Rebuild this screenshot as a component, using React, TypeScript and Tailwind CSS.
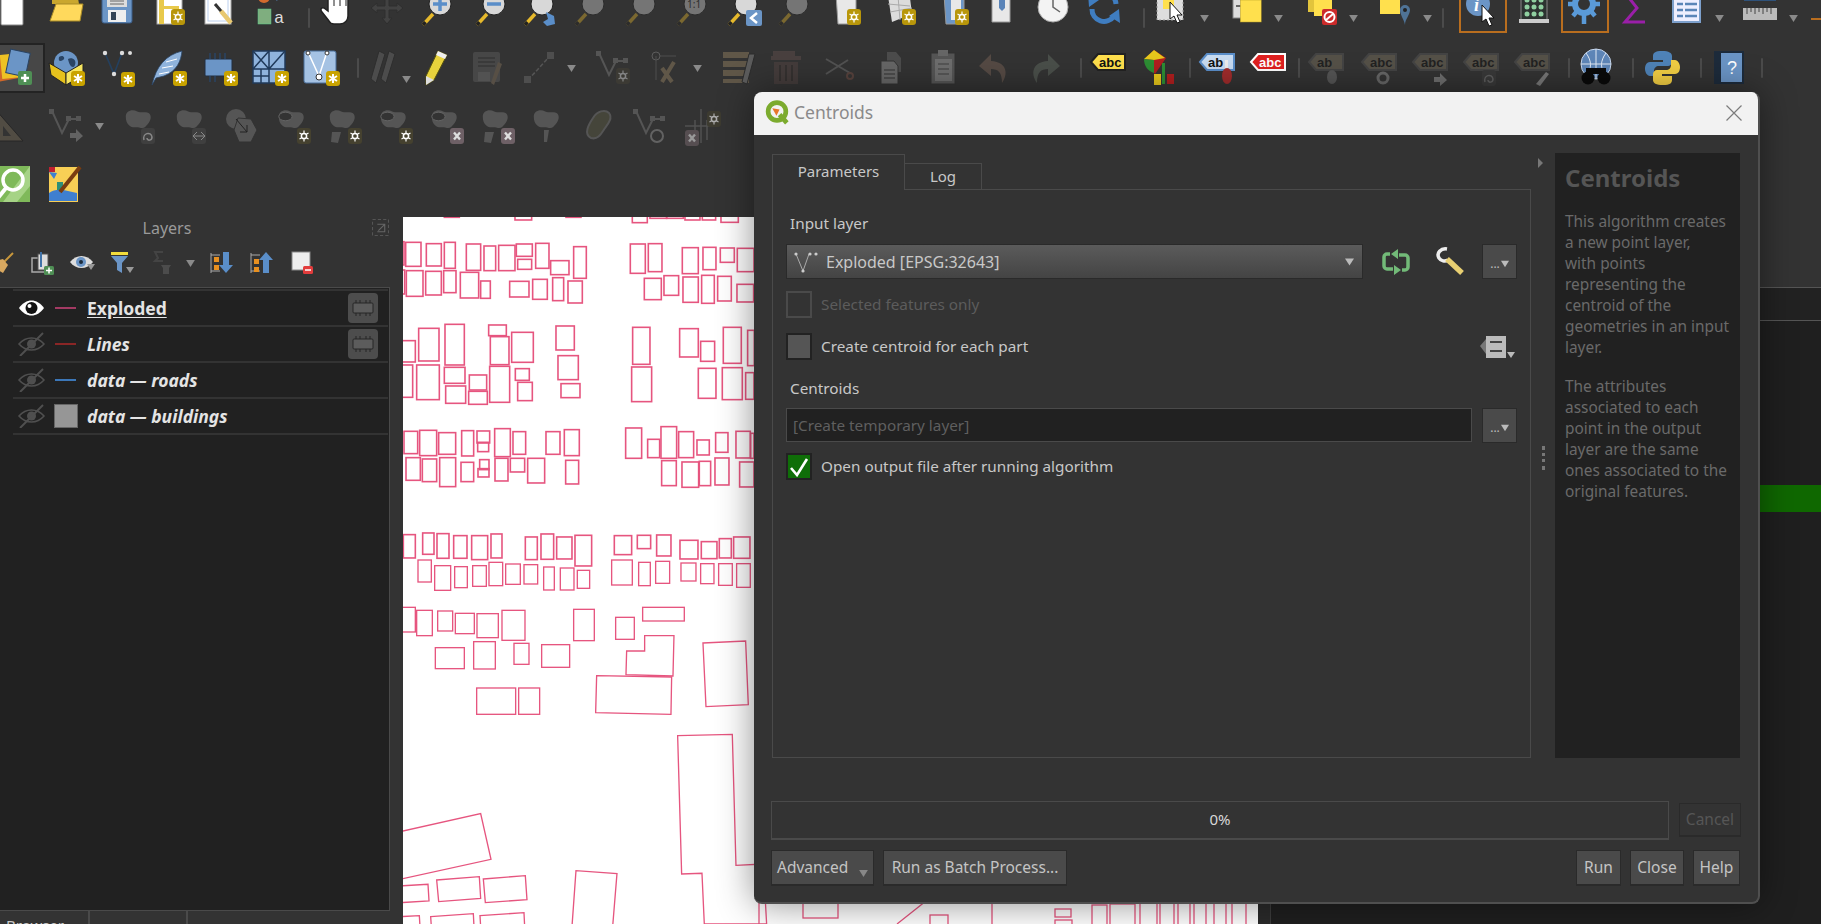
import type { ReactNode } from "react";

type P = { children?: ReactNode; className?: string };

// ---- toolbar bits ----

function Ic({ children, className = "" }: P) {
  return (
    <svg viewBox="0 0 36 36" className={`w-9 h-9 shrink-0 overflow-visible ${className}`}>
      {children}
    </svg>
  );
}

function T({ children, className = "" }: P) {
  return <div className={`relative w-[51px] shrink-0 flex justify-center items-center ${className}`}>{children}</div>;
}

function Drop({ className = "mr-[7px]" }: { className?: string }) {
  return (
    <div className={`w-[16px] shrink-0 flex justify-center ${className}`}>
      <svg viewBox="0 0 10 8" className="w-[9px] h-[7px]">
        <path d="M0 0h10L5 8z" fill="#8a8a8a" />
      </svg>
    </div>
  );
}

function Sep({ className = "" }: { className?: string }) {
  return (
    <div className={`shrink-0 flex justify-end pr-[1px] ${className}`}>
      <div className="w-[2px] h-[20px] bg-[#4b4b4b] rounded-sm" />
    </div>
  );
}

// badges
const StarB = ({ x = 22, y = 22 }: { x?: number; y?: number }) => (
  <g transform={`translate(${x} ${y})`}>
    <rect width="14" height="15" rx="3" fill="#c9a300" />
    <path d="M7 3v9M3 5l8 5M11 5l-8 5" stroke="#fff" strokeWidth="2" />
  </g>
);
const GearB = ({ x = 22, y = 20, fill = "#b8960a" }: { x?: number; y?: number; fill?: string }) => (
  <g transform={`translate(${x} ${y})`}>
    <rect width="14" height="16" rx="3" fill={fill} />
    <circle cx="7" cy="8" r="2.6" fill="none" stroke="#fff" strokeWidth="1.5" />
    <path d="M7 2.5v3M7 10.500v3M2.500 5l2.500 1.500M11.500 5l-2.500 1.500M2.500 11l2.500-1.500M11.500 11l-2.500-1.500" stroke="#fff" strokeWidth="1.200" />
  </g>
);
const XB = ({ x = 22, y = 20 }: { x?: number; y?: number }) => (
  <g transform={`translate(${x} ${y})`}>
    <rect width="14" height="16" rx="3" fill="#6e6066" />
    <path d="M4 4.500l6 7M10 4.500l-6 7" stroke="#ddd" strokeWidth="2.400" />
  </g>
);
const Vee = ({ c = "#24405f", n = "#ddd" }: { c?: string; n?: string }) => (
  <g>
    <path d="M6 3l9 21 8-21" fill="none" stroke={c} strokeWidth="1.600" />
    <circle cx="6" cy="3" r="2.200" fill={n} />
    <circle cx="15" cy="24" r="2.200" fill={n} />
    <circle cx="23" cy="3" r="2.200" fill={n} />
    <circle cx="31" cy="3" r="2" fill={n} />
  </g>
);
const Lens = () => (
  <g>
    <path d="M3 33l10-11" stroke="#e6b92c" strokeWidth="3.500" />
    <path d="M3 33l2.500-2.800" stroke="#222" strokeWidth="3.500" />
    <circle cx="20" cy="12" r="11" fill="#d8d8d8" stroke="#222" strokeWidth="1" />
  </g>
);
const Blob = ({ f = "#555" }: { f?: string }) => (
  <path d="M4 10c0-7 7-9 12-6 4 2 8 0 12 2 4 3 2 10-1 13-3 3-3 6-9 4-4-1-7 1-10-2-3-3-4-6-4-11z" fill={f} transform="scale(.95 .85)" />
);
const Ring = () => (
  <g transform="scale(.95 .85)">
    <path d="M4 10c0-7 7-9 12-6 4 2 8 0 12 2 4 3 2 10-1 13-3 3-3 6-9 4-4-1-7 1-10-2-3-3-4-6-4-11z" fill="#555" />
    <ellipse cx="11" cy="10" rx="7" ry="5" fill="#333" stroke="#666" />
  </g>
);

const DocI = () => (
  <Ic>
    <path d="M4 -4h22v28a1 1 0 0 1-1 1H5a1 1 0 0 1-1-1z" fill="#fff" stroke="#888" />
  </Ic>
);
const FolderI = () => (
  <Ic>
    <path d="M4 -2h26l1 6H4z" fill="#caa72e" />
    <path d="M8 4h27l-3 17H2z" fill="#ffd95c" stroke="#a98b26" />
  </Ic>
);
const SaveI = () => (
  <Ic>
    <rect x="3" y="-6" width="30" height="29" rx="2" fill="#6b95c6" stroke="#3a5d88" />
    <rect x="8" y="-4" width="20" height="11" fill="#ddd" />
    <path d="M11 1h14M11 4h14" stroke="#666" />
    <rect x="9" y="10" width="18" height="12" fill="#eee" />
    <rect x="12" y="12" width="5" height="8" fill="#345" />
  </Ic>
);
const LayoutI = () => (
  <Ic>
    <rect x="4" y="-6" width="25" height="30" fill="#fff" stroke="#aaa" />
    <path d="M6 -6h5v30H6zM6 6h20v3H6z" fill="#e8c94b" />
    <GearB x={18} y={9} />
  </Ic>
);
const WrenchDocI = () => (
  <Ic>
    <rect x="4" y="-6" width="26" height="30" fill="#fff" stroke="#aaa" />
    <rect x="7" y="-3" width="20" height="24" fill="none" stroke="#bcd0ee" />
    <path d="M14 4l12 14" stroke="#333" strokeWidth="3" />
    <path d="M20 11l10 12" stroke="#e8c870" strokeWidth="4.500" />
  </Ic>
);
const StyleI = () => (
  <Ic>
    <circle cx="12" cy="-3" r="6" fill="#d26a2e" />
    <rect x="6" y="9" width="13" height="15" fill="#7fae7f" stroke="#5c8" strokeWidth=".5" />
    <path d="M24 0l6-7" stroke="#5a8ec9" strokeWidth="2.500" />
    <text x="22" y="23" fontSize="17" fill="#ddd" fontFamily="Liberation Mono, monospace">a</text>
  </Ic>
);
const HandI = () => (
  <Ic>
    <path d="M10 -6v17l-4-3c-3-1-4 2-2 4l7 9c1 2 3 3 5 3h6c5 0 8-4 8-8V-6z" fill="#fff" stroke="#222" strokeWidth="1.500" />
    <path d="M16 -6v12M22 -6v12M28 -6v12" stroke="#222" />
  </Ic>
);
const PanI = () => (
  <Ic className="opacity-30">
    <path d="M18 -8l5 6h-3v8h8v-3l6 5-6 5v-3h-8v8h3l-5 6-5-6h3v-8H8v3L2 8l6-5v3h8v-8h-3z" fill="#666" stroke="#222" />
  </Ic>
);
const ZoomI = ({ kind }: { kind: "in" | "out" | "full" | "plain" | "one" | "last" | "dim" }) => (
  <Ic className={kind === "plain" || kind === "one" || kind === "dim" ? "opacity-40" : ""}>
    <g transform="translate(0 -8)">
      <Lens />
      {kind === "in" && <path d="M20 5v14M13 12h14" stroke="#5a8ec9" strokeWidth="3.500" />}
      {kind === "out" && <path d="M13 12h14" stroke="#5a8ec9" strokeWidth="3.500" />}
      {kind === "full" && <path d="M24 20l8 4 1 8-8 2-4-4 5-3z" fill="#5a8ec9" />}
      {kind === "last" && (
        <g>
          <rect x="20" y="18" width="16" height="16" rx="2" fill="#6b95c6" />
          <path d="M31 21l-6 5 6 5" fill="none" stroke="#fff" strokeWidth="2.500" />
        </g>
      )}
      {kind === "one" && <text x="12" y="16" fontSize="10" fill="#222">1:1</text>}
    </g>
  </Ic>
);
const NewMapI = ({ blue }: { blue?: boolean }) => (
  <Ic>
    <path d="M8 -6h16l4 6v24H10z" fill={blue ? "#6b95c6" : "#e8e8e8"} stroke="#999" />
    {blue && <path d="M15 -6h10v26H15z" fill="#e8e8e8" />}
    <GearB x={19} y={9} />
  </Ic>
);
const Map3dI = () => (
  <Ic>
    <path d="M6 -4L28 -2 30 14 10 22z" fill="#dcdcdc" />
    <path d="M6 4l22 2M8 12l22 -4M16 -4l2 24" stroke="#aaa" />
    <GearB x={20} y={9} />
  </Ic>
);
const BookmarkI = () => (
  <Ic>
    <path d="M8 -6h16l2 4v24H8z" fill="#e8e8e8" stroke="#999" />
    <path d="M15 -6h6v14l-3 3-3-3z" fill="#5a84b8" />
  </Ic>
);
const ClockI = () => (
  <Ic>
    <circle cx="18" cy="7" r="15" fill="#f3f3f3" stroke="#aaa" />
    <path d="M18 -4v11l7 5" fill="none" stroke="#666" strokeWidth="1.500" />
  </Ic>
);
const RefreshI = () => (
  <Ic>
    <path d="M30 4A12 12 0 0 0 9 -3" fill="none" stroke="#3f7dc0" strokeWidth="5" />
    <path d="M6 9a12 12 0 0 0 22 7" fill="none" stroke="#3f7dc0" strokeWidth="5" />
    <path d="M2 -7l1 14 10-7zM34 23l-1-14-10 7z" fill="#3f7dc0" />
  </Ic>
);
const Cursor = ({ x, y }: { x: number; y: number }) => (
  <path transform={`translate(${x} ${y})`} d="M0 0v17l4-3 3 7 3-1-3-7h5z" fill="#fff" stroke="#111" />
);
const SelectI = () => (
  <Ic>
    <rect x="4" y="-4" width="26" height="24" fill="#ddd" stroke="#999" strokeDasharray="2 2" />
    <rect x="10" y="-6" width="11" height="15" fill="#ffe04d" />
    <Cursor x={17} y={2} />
  </Ic>
);
const OpenTableI = () => (
  <Ic>
    <rect x="6" y="-6" width="20" height="24" fill="#ddd" stroke="#888" />
    <path d="M9 -1h14M9 6h14" stroke="#666" strokeWidth="2" />
    <rect x="14" y="0" width="22" height="22" fill="#ffe04d" stroke="#b59a25" strokeWidth=".5" transform="scale(.95 1)" />
  </Ic>
);
const DeselI = () => (
  <Ic>
    <rect x="6" y="-6" width="14" height="18" fill="#e2c43c" />
    <rect x="12" y="0" width="18" height="16" fill="#ffe04d" />
    <rect x="20" y="9" width="15" height="16" rx="2" fill="#cc2b2b" />
    <circle cx="27.500" cy="17" r="5" fill="none" stroke="#fff" strokeWidth="2" />
    <path d="M24 20l7-6" stroke="#fff" strokeWidth="2" />
  </Ic>
);
const SelPinI = () => (
  <Ic>
    <rect x="4" y="-6" width="20" height="20" fill="#ffe04d" />
    <path d="M24 10a5 5 0 0 1 10 0c0 5-5 9-5 15-1-6-5-10-5-15z" fill="#4f7396" />
    <circle cx="29" cy="10" r="2" fill="#222" />
  </Ic>
);
const IdentI = () => (
  <Ic>
    <circle cx="14" cy="4" r="12" fill="#6b95c6" />
    <text x="10" y="11" fontSize="18" fontStyle="italic" fontWeight="700" fill="#fff" fontFamily="Liberation Serif, serif">i</text>
    <Cursor x={18} y={5} />
  </Ic>
);
const StatsI = () => (
  <Ic>
    <rect x="6" y="-6" width="26" height="26" fill="#2c3330" stroke="#888" />
    <rect x="4" y="19" width="30" height="4" fill="#ccc" />
    {[0, 7, 14].map((y) => (
      <g key={y} fill="#8fd0a0">
        <circle cx="12" cy={y} r="2.500" />
        <circle cx="19" cy={y} r="2.500" />
        <circle cx="26" cy={y} r="2.500" />
      </g>
    ))}
  </Ic>
);
const BigGearI = () => (
  <Ic>
    <circle cx="18" cy="4" r="9" fill="none" stroke="#5a9ad8" strokeWidth="6" />
    <path d="M18 -12v8M18 12v12M2 4h8M26 4h8M7 -7l5 5M24 10l5 6M29 -7l-5 5M12 10l-5 6" stroke="#5a9ad8" strokeWidth="4.500" />
  </Ic>
);
const SigmaI = () => (
  <Ic>
    <path d="M28 -6H9l11 14L8 22h20" fill="none" stroke="#9a1fa8" strokeWidth="3" />
  </Ic>
);
const TableI = () => (
  <Ic>
    <rect x="5" y="-8" width="27" height="30" fill="#eef" stroke="#7da0cc" strokeWidth="2" />
    <path d="M9 -2h6M17 -2h12M9 4h6M17 4h12M9 10h6M17 10h12M9 16h6M17 16h12" stroke="#5a84b8" strokeWidth="2.500" />
  </Ic>
);
const RulerI = () => (
  <Ic>
    <rect x="2" y="-4" width="32" height="5" fill="#2f527a" />
    <rect x="1" y="8" width="34" height="12" fill="#bbb" />
    <path d="M5 8v6M9 8v4M13 8v6M17 8v4M21 8v6M25 8v4M29 8v6" stroke="#444" />
  </Ic>
);

const AddLayersI = () => (
  <Ic>
    <rect x="0" y="6" width="20" height="24" fill="#d0682a" transform="rotate(-10 10 18)" />
    <rect x="4" y="4" width="20" height="24" fill="#eec224" transform="rotate(-6 14 16)" />
    <rect x="11" y="1" width="20" height="24" fill="#6b95c6" stroke="#2a4464" transform="rotate(12 21 13)" />
    <rect x="21" y="21" width="14" height="14" rx="2" fill="#4f8f55" />
    <path d="M28 24v8M24 28h8" stroke="#fff" strokeWidth="2.500" />
  </Ic>
);
const GlobeBoxI = () => (
  <Ic>
    <circle cx="18" cy="13" r="12" fill="#6b95c6" />
    <path d="M11 7c4-3 7 1 4 3s-5 1-4-3zM20 9c4-2 9 1 7 6s-6 0-7-6z" fill="#2a4464" />
    <path d="M1 13l17 10v12L3 25z" fill="#e5c11d" stroke="#222" />
    <path d="M18 23l17-10v12L18 35z" fill="#f6e560" stroke="#222" />
    <StarB x={23} y={21} />
  </Ic>
);
const VStarI = () => (
  <Ic>
    <Vee />
    <StarB />
  </Ic>
);
const FeatherI = () => (
  <Ic>
    <path d="M2 35C6 16 16 5 32 1c-1 10-5 20-18 25l-8 2z" fill="#8fb3dc" stroke="#2a4464" strokeWidth=".8" />
    <path d="M9 24l10-2M12 18l11-2M16 12l11-3" stroke="#fff" />
    <StarB x={23} y={21} />
  </Ic>
);
const ChipI = () => (
  <Ic>
    <rect x="4" y="9" width="27" height="17" rx="1" fill="#6b95c6" stroke="#222f40" />
    <path d="M9 3v6M14 3v6M19 3v6M24 3v6M9 26v6M14 26v6" stroke="#2a4464" strokeWidth="1.500" />
    <StarB x={23} y={21} />
  </Ic>
);
const MeshI = () => (
  <Ic>
    <rect x="1" y="1" width="32" height="32" fill="#8fb3dc" stroke="#203a5a" strokeWidth="1.500" />
    <path d="M17 1v32M1 19h32M1 1l16 18M17 1l-16 18M33 1l-16 18M9 19v14M1 26h16" stroke="#203a5a" strokeWidth="1.500" />
    <StarB x={23} y={21} />
  </Ic>
);
const VBoxI = () => (
  <Ic>
    <rect x="1" y="1" width="32" height="32" rx="2" fill="#a5c2e3" stroke="#4a6f9a" />
    <path d="M5 2l11 24 8-24" fill="none" stroke="#fff" strokeWidth="1.500" />
    <circle cx="16" cy="27" r="3" fill="#fff" stroke="#333" />
    <circle cx="5" cy="3" r="2" fill="#fff" stroke="#333" />
    <circle cx="24" cy="3" r="2" fill="#fff" stroke="#333" />
    <StarB x={23} y={21} />
  </Ic>
);
const DimPencilsI = () => (
  <Ic className="opacity-30">
    <path d="M12 1l6 3-9 29-5-4zM22 1l6 3-9 29-5-4z" fill="#888" stroke="#222" />
  </Ic>
);
const PencilI = () => (
  <Ic>
    <path d="M22 1l9 4-13 25-8 5 0-9z" fill="#e8d23c" stroke="#55500f" />
    <path d="M22 1l9 4-2 4-9-4z" fill="#eee" />
    <path d="M10 26l8 4-8 5z" fill="#ddd" />
  </Ic>
);
const DimSaveI = () => (
  <Ic className="opacity-30">
    <rect x="4" y="2" width="27" height="30" rx="2" fill="#777" />
    <path d="M9 8h17M9 12h17M9 16h17" stroke="#222" />
    <rect x="9" y="22" width="12" height="9" fill="#999" />
    <path d="M33 14l-8 21-3-2 7-21z" fill="#aa9070" />
  </Ic>
);
const DimLineI = () => (
  <Ic className="opacity-40">
    <path d="M8 30L30 6" stroke="#888" strokeWidth="1.500" strokeDasharray="4 2" />
    <rect x="4" y="26" width="7" height="7" fill="#777" />
    <rect x="27" y="2" width="7" height="7" fill="#777" />
  </Ic>
);
const DimV = ({ children }: P) => (
  <Ic className="opacity-40">
    <path d="M4 3l10 22 7-14h12" fill="none" stroke="#888" strokeWidth="2" />
    <rect x="1" y="1" width="5" height="5" fill="#888" />
    <rect x="18" y="8" width="5" height="5" fill="#888" />
    <rect x="28" y="8" width="5" height="5" fill="#888" />
    {children}
  </Ic>
);
const HammerI = () => (
  <Ic className="opacity-40">
    <circle cx="10" cy="6" r="4" fill="none" stroke="#999" />
    <path d="M10 6v24M14 6h16" stroke="#777" />
    <path d="M16 18l10 14M28 12l-12 20" stroke="#a58d68" strokeWidth="4" />
  </Ic>
);
const DimTableI = () => (
  <Ic className="opacity-40">
    <path d="M2 2h26v6H2zM2 11h26v6H2zM2 20h26v6H2zM2 29h26v4H2z" fill="#a58d68" />
    <path d="M34 4l-8 30-5-2 7-28z" fill="#999" stroke="#222" />
  </Ic>
);
const TrashI = () => (
  <Ic className="opacity-30">
    <path d="M4 1h22v5h6v4H2V6h2z" fill="#7d5f5c" />
    <path d="M5 12h24v22H5z" fill="#6e524f" />
    <path d="M11 15v16M17 15v16M23 15v16" stroke="#3a2d2b" strokeWidth="2" />
  </Ic>
);
const ScissorsI = () => (
  <Ic className="opacity-30">
    <path d="M6 9l24 14M6 24L28 10" stroke="#999" strokeWidth="2" />
    <circle cx="30" cy="26" r="3" fill="none" stroke="#a65" strokeWidth="2" />
  </Ic>
);
const CopyI = () => (
  <Ic className="opacity-50">
    <path d="M13 2h9l5 6v14H13z" fill="#666" />
    <path d="M7 11h13l4 5v18H7z" fill="#999" stroke="#333" />
    <path d="M10 20h11M10 24h11M10 28h11" stroke="#333" />
  </Ic>
);
const PasteI = () => (
  <Ic className="opacity-50">
    <rect x="6" y="3" width="24" height="31" fill="#777" stroke="#333" />
    <rect x="13" y="0" width="10" height="6" fill="#999" />
    <rect x="10" y="9" width="17" height="22" fill="#aaa" />
    <path d="M13 14h11M13 19h11M13 24h11" stroke="#444" />
  </Ic>
);
const UndoI = ({ flip }: { flip?: boolean }) => (
  <Ic className={`opacity-40 ${flip ? "-scale-x-100" : ""}`}>
    <path d="M15 4L3 16l12 10v-7c7 0 11 3 11 14 6-8 6-21-11-22z" fill={flip ? "#6d7a6d" : "#8a6d60"} />
  </Ic>
);
const LabelI = ({ t = "abc", f, s, c = "#111" }: { t?: string; f: string; s: string; c?: string }) => (
  <g>
    <path d="M1 12l7-8h27v16H8z" fill={f} stroke={s} strokeWidth="2" />
    <text x="9" y="17" fontSize="13" fontWeight="700" fill={c} fontFamily="Liberation Sans, sans-serif">{t}</text>
  </g>
);
const AbcYellow = () => (
  <Ic>
    <LabelI f="#ffe04d" s="#222" />
  </Ic>
);
const PieBars = () => (
  <Ic>
    <path d="M13 -0L25 8 14 24 3 10z" fill="#b21f1f" />
    <path d="M13 0L24 8 13 10 3 9z" fill="#e8c81c" />
    <path d="M3 9l10 1v13c-7-2-10-8-10-14z" fill="#2d8f34" />
    <rect x="13" y="24" width="7" height="11" fill="#e8c81c" />
    <rect x="21" y="13" width="3" height="21" fill="#2d8f34" />
    <rect x="26" y="24" width="7" height="10" fill="#b21f1f" />
  </Ic>
);
const AbBlue = () => (
  <Ic>
    <LabelI t="ab" f="#c8dcf2" s="#5a8ec9" />
    <rect x="26" y="10" width="3" height="9" fill="#eee" />
    <ellipse cx="28" cy="26" rx="5" ry="8" fill="#a02c2c" />
  </Ic>
);
const AbcRed = () => (
  <Ic>
    <LabelI f="#e02020" s="#fff" c="#fff" />
  </Ic>
);
const DimLabel = ({ children, t = "abc" }: P & { t?: string }) => (
  <Ic className="opacity-50">
    <LabelI t={t} f="#776f5e" s="#555" />
    {children}
  </Ic>
);
const GlobeBinoI = () => (
  <Ic>
    <circle cx="18" cy="14" r="15" fill="#5e86b8" stroke="#c8d8ee" />
    <path d="M3 14h30M18 -1v30M8 3c6 8 6 16 0 22M28 3c-6 8-6 16 0 22" stroke="#e0e8f4" fill="none" />
    <circle cx="10" cy="28" r="6.500" fill="#0a0a0a" />
    <circle cx="26" cy="28" r="6.500" fill="#0a0a0a" />
    <rect x="8" y="18" width="20" height="6" fill="#0a0a0a" />
  </Ic>
);
const PythonI = () => (
  <Ic>
    <path d="M17 1c-7 0-9 2-9 5v4h10v2H5c-4 0-5 4-5 7s2 7 5 7h4v-5c0-3 2-5 5-5h9c2 0 4-2 4-4V6c0-3-3-5-10-5z" fill="#4f83b8" />
    <path d="M18 35c7 0 9-2 9-5v-4H17v-2h13c4 0 5-4 5-7s-2-7-5-7h-4v5c0 3-2 5-5 5h-9c-2 0-4 2-4 4v6c0 3 3 5 10 5z" fill="#f3cf44" />
  </Ic>
);
const HelpI = () => (
  <Ic>
    <rect x="4" y="1" width="30" height="33" fill="#1d2b3b" />
    <rect x="11" y="3" width="21" height="29" fill="#6b95c6" />
    <text x="17" y="24" fontSize="18" fill="#fff" fontFamily="Liberation Sans, sans-serif">?</text>
  </Ic>
);
const SearchGreen = () => (
  <Ic>
    <rect x="-2" y="0" width="35" height="36" fill="#7fb95a" />
    <path d="M6 36L33 0h0v20L20 36z" fill="#a6d386" />
    <circle cx="16" cy="14" r="10" fill="none" stroke="#fff" strokeWidth="3.500" />
    <path d="M9 22L0 33" stroke="#fff" strokeWidth="4" />
  </Ic>
);
const MapPenI = () => (
  <Ic>
    <rect x="4" y="1" width="29" height="35" fill="#f8cf55" />
    <path d="M4 6l8 1-3 6zM4 27c8-6 18-2 28 0v8H4z" fill="#3f7fd0" />
    <path d="M12 16h6v8h-6z" fill="#2f8f78" />
    <path d="M4 1h6v5H4z" fill="#c02030" />
    <path d="M35 1L15 26" stroke="#7a3d10" strokeWidth="4" />
  </Ic>
);
const Spiral = () => (
  <g>
    <rect x="19" y="20" width="14" height="16" rx="3" fill="#3f3f3f" />
    <path d="M22 32c-2-7 7-9 8-3 0 4-5 4-5 1" fill="none" stroke="#888" strokeWidth="1.500" />
  </g>
);

// ---- panel icons ----

const Eye = ({ on }: { on: boolean }) =>
  on ? (
    <svg viewBox="0 0 27 18" className="w-[27px] h-[18px] shrink-0">
      <path d="M1 9c7-10 18-10 25 0-7 10-18 10-25 0z" fill="#fff" />
      <circle cx="13.500" cy="9" r="6" fill="#111" />
      <circle cx="11.500" cy="7" r="2" fill="#fff" />
    </svg>
  ) : (
    <svg viewBox="0 0 27 24" className="w-[27px] h-[24px] shrink-0">
      <path d="M1 12c7-8 18-8 25 0-7 8-18 8-25 0z" fill="none" stroke="#4f4f4f" strokeWidth="1.600" />
      <circle cx="13.500" cy="12" r="4.500" fill="#4f4f4f" />
      <path d="M2 24L25 1" stroke="#4f4f4f" strokeWidth="2" />
    </svg>
  );

const Chip = () => (
  <div className="w-[30px] h-[30px] rounded bg-[#4d4d4d] flex items-center justify-center shrink-0">
    <svg viewBox="0 0 22 18" className="w-[22px] h-[18px]">
      <rect x="1" y="4" width="20" height="10" rx="1" fill="#5c5c5c" stroke="#262626" />
      <path d="M4 1v3M8 1v3M14 1v3M18 1v3M4 14v3M8 14v3M14 14v3M18 14v3" stroke="#262626" />
    </svg>
  </div>
);

function Layer({ name, on, sym, chip, bold }: { name: string; on?: boolean; sym: ReactNode; chip?: boolean; bold?: boolean }) {
  return (
    <div className="h-[36px] flex items-center pl-[5px] pr-[10px] border-b-2 border-[#333]">
      <div className="w-[27px] flex justify-center">
        <Eye on={!!on} />
      </div>
      <div className="w-[24px] ml-[9px] flex justify-start">{sym}</div>
      <span className={`ml-[9px] text-[17.5px] font-bold text-[#e4e4e4] ${bold ? "underline underline-offset-2" : "italic"}`}>{name}</span>
      {chip && (
        <div className="ml-auto">
          <Chip />
        </div>
      )}
    </div>
  );
}

const Line = ({ c }: { c: string }) => <div className={`w-[21px] h-[2px] ml-[1px] ${c}`} />;

// ---- map ----

const top: number[][] = [
  [133,-5,45,27],[345,-5,50,35],[498,-5,45,27],[697,-5,45,43],[750,-5,50,30],[800,-5,50,30],[855,-5,45,35],[907,-5,40,35],[963,-5,52,42],
  [0,95,12,70],[17,97,46,72],[79,101,45,67],[133,97,33,78],[199,102,43,79],[252,108,35,74],[296,106,49,76],[349,102,48,37],[353,148,42,30],[407,100,40,75],[452,152,55,42],[521,110,38,95],[691,102,45,88],[745,101,41,84],[847,113,48,78],[909,112,39,67],[961,114,42,43],[1012,115,50,70],
  [0,180,14,72],[19,182,50,77],[77,184,47,71],[131,182,37,66],[181,187,55,77],[242,213,29,52],[329,214,58,47],[398,208,44,60],[458,203,33,69],[504,213,43,66],[733,205,51,64],[792,197,44,59],[849,201,46,76],[905,196,38,84],[953,199,41,74],[1011,223,50,53],
  [0,392,46,64],[56,355,61,98],[135,343,58,122],[266,345,53,32],[271,380,56,84],[335,367,65,90],[468,348,55,72],[698,352,52,111],[839,356,56,85],[902,394,42,60],[970,352,54,108],[1043,361,20,106],
  [0,465,38,97],[50,465,68,104],[133,472,62,48],[137,528,60,52],[208,495,52,45],[206,544,56,39],[269,469,60,108],[346,476,42,35],[353,517,44,55],[474,437,61,72],[483,521,57,42],[695,471,60,104],[895,475,53,90],[967,473,60,96],[1037,488,25,80],
  [12,664,41,67],[59,661,51,76],[116,668,51,65],[185,662,36,76],[231,663,38,36],[233,697,33,28],[284,656,47,84],[339,665,38,68],[438,665,42,68],[493,659,45,78],[677,654,48,91],[743,688,36,55],[783,650,47,95],[836,665,45,78],[891,690,37,45],[947,668,37,59],[1008,664,43,80],[1052,670,10,75],
  [18,743,43,68],[67,747,43,68],[119,743,48,87],[183,757,38,58],[239,749,28,30],[234,776,33,25],[285,745,39,68],[331,745,43,41],[383,745,51,74],[497,751,39,71],[785,752,44,75],[846,756,50,76],[898,754,34,73],[945,744,42,81],[1019,756,43,75],
  [10,974,36,70],[68,969,34,64],[111,971,36,74],[161,977,40,68],[215,977,48,72],[273,972,33,72],[376,981,36,68],[423,972,38,76],[470,981,46,66],[525,976,50,92],[643,977,52,57],[712,976,40,40],[770,975,43,63],[840,991,54,56],[904,995,47,51],[958,986,36,58],[1001,981,49,64],
];
const low: number[][] = [
  [54,0,40,66],[104,17,48,74],[164,20,38,63],[218,17,41,62],[267,7,41,70],[317,12,44,61],[372,14,41,58],[431,21,32,69],[481,24,41,66],[532,31,37,54],[635,0,62,75],[716,7,35,70],[767,4,42,66],[843,9,45,54],[902,11,40,60],[956,11,41,65],[1010,11,41,71],
  [0,142,46,74],[50,151,47,76],[113,153,45,60],[166,160,57,61],[231,161,64,72],[306,151,69,90],[521,148,62,94],[647,172,56,66],[728,142,125,41],
  [106,263,87,63],[221,245,65,82],[342,250,45,63],[425,254,84,68],[230,384,117,79],[356,384,63,79],
];
const lowPoly = [
  "734,227 822,227 819,348 678,344 680,273 734,273",
  "590,347 815,351 813,463 587,458",
  "909,249 1037,243 1045,434 918,440",
  "833,527 997,523 1008,916 1090,912 1100,1092 913,1092 906,940 845,942",
  "0,815 242,761 273,898 0,958",
  "0,978 84,973 87,1023 0,1028",
  "110,960 238,950 242,1015 116,1025",
  "250,957 376,947 381,1019 256,1028",
  "0,1070 58,1067 60,1100 0,1100",
  "92,1070 220,1061 222,1100 94,1100",
  "240,1067 372,1058 374,1100 242,1100",
  "516,1100 528,932 651,941 638,1100",
];
const bottom: number[][] = [
  [803,900,35,18],[930,915,18,20],[1052,895,16,8],[1055,909,16,8],[1055,920,17,8],[1092,905,15,30],[1110,904,25,30],[1140,902,17,30],[1160,902,14,30],[1178,902,12,30],[1194,902,12,30],[1214,902,12,30],[1232,902,14,30],
];

function BuildingMap() {
  return (
    <svg viewBox="403 217 855 707" className="block w-full h-full">
      <g fill="none" stroke="#e6557f">
        <g transform="translate(400 210) scale(.3333)" strokeWidth="4.800">
          {top.map(([x, y, w, h], i) => (
            <rect key={i} x={x} y={y} width={w} height={h} />
          ))}
        </g>
        <g transform="translate(400 560) scale(.3333)" strokeWidth="4">
          {low.map(([x, y, w, h], i) => (
            <rect key={i} x={x} y={y} width={w} height={h} />
          ))}
          {lowPoly.map((p, i) => (
            <polygon key={i} points={p} />
          ))}
        </g>
        <g strokeWidth="1.300">
          {bottom.map(([x, y, w, h], i) => (
            <rect key={i} x={x} y={y} width={w} height={h} />
          ))}
          <path d="M759 890v40M897 924l29-23M992 890v40" />
        </g>
      </g>
    </svg>
  );
}

// ---- dialog ----

function Btn({ children, className = "" }: P) {
  return (
    <div className={`h-[36px] flex items-center justify-center bg-[#4a4a4a] border border-[#2a2a2a] border-b-2 text-[15.500px] text-[#c4c4c4] ${className}`}>
      {children}
    </div>
  );
}

function Dots() {
  return (
    <div className="w-[35px] h-[35px] bg-[#4a4a4a] border border-[#2a2a2a] flex items-end justify-center pb-[9px] gap-[1px] shrink-0">
      <span className="text-[12px] leading-[10px] text-[#bbb]">...</span>
      <svg viewBox="0 0 10 8" className="w-[8px] h-[8px] mb-[1px]">
        <path d="M0 0h10L5 8z" fill="#bbb" />
      </svg>
    </div>
  );
}

function Check({ kind }: { kind: "off" | "idle" | "on" }) {
  const cls =
    kind === "off"
      ? "border-[#4a4a4a] bg-[#333]"
      : kind === "idle"
        ? "border-[#222] bg-[#555]"
        : "border-[#222] bg-[#0f6e08]";
  return (
    <div className={`w-[26px] h-[27px] border-2 shrink-0 flex items-center justify-center ${cls}`}>
      {kind === "on" && (
        <svg viewBox="0 0 20 20" className="w-[20px] h-[20px]">
          <path d="M2 11l6 7L18 2" fill="none" stroke="#fff" strokeWidth="2.600" />
        </svg>
      )}
    </div>
  );
}

function Centroids() {
  return (
    <div className="absolute left-[754px] top-[92px] w-[1006px] h-[812px] flex flex-col bg-[#333] rounded-lg border-r-2 border-b-2 border-[#4f4f4f] shadow-[0_0_36px_rgba(0,0,0,0.45)] overflow-hidden">
      <div className="h-[43px] shrink-0 bg-[#f2f2f2] flex items-center pl-[11px] pr-[16px] pb-[2px]">
        <svg viewBox="0 0 24 24" className="w-[25px] h-[25px]">
          <circle cx="11.500" cy="11" r="8.500" fill="none" stroke="#7cab2e" strokeWidth="4.500" />
          <path d="M14 14l7 8" stroke="#7cab2e" strokeWidth="4.500" />
          <path d="M7 8l7 1-3 6z" fill="#e8762a" />
        </svg>
        <span className="ml-[4px] text-[17.500px] text-[#8a8a8a]">Centroids</span>
        <svg viewBox="0 0 16 16" className="ml-auto w-[16px] h-[16px]">
          <path d="M0.500 0.500l15 15M15.500 0.500l-15 15" stroke="#7c7c7c" strokeWidth="1.200" />
        </svg>
      </div>

      <div className="flex pl-[18px] pt-[18px]">
        <div className="w-[759px] shrink-0">
          <div className="flex items-end h-[36px]">
            <div className="relative z-10 w-[133px] h-[36px] -mb-px bg-[#333] border border-[#4a4a4a] border-b-0 pt-[5px] text-center text-[15px] text-[#c8c8c8]">
              Parameters
            </div>
            <div className="w-[77px] h-[26px] border border-l-0 border-[#4a4a4a] border-b-0 pt-[1px] text-center text-[15px] text-[#c8c8c8]">
              Log
            </div>
          </div>
          <div className="h-[569px] border border-[#4a4a4a] pl-[13px] pr-[13px] text-[15.300px] text-[#c8c8c8]">
            <div className="pl-[4px] pt-[22px] leading-[22px]">Input layer</div>
            <div className="flex items-start mt-[10px]">
              <div className="w-[577px] h-[35px] bg-gradient-to-b from-[#5b5b5b] to-[#444] border border-[#2a2a2a] flex items-center pl-[6px] pr-[8px]">
                <svg viewBox="0 0 26 22" className="w-[26px] h-[22px]">
                  <path d="M3 3l7 17 6-17" fill="none" stroke="#aaa" />
                  <circle cx="3" cy="3" r="1.600" fill="#ccc" />
                  <circle cx="10" cy="20" r="1.600" fill="#ccc" />
                  <circle cx="17" cy="3" r="1.600" fill="#ccc" />
                  <circle cx="23" cy="3" r="1.600" fill="#ccc" />
                </svg>
                <span className="ml-[7px] text-[16px]">Exploded [EPSG:32643]</span>
                <svg viewBox="0 0 10 8" className="ml-auto w-[9px] h-[8px]">
                  <path d="M0 0h10L5 8z" fill="#bbb" />
                </svg>
              </div>
              <svg viewBox="0 0 30 26" className="ml-[18px] mt-[5px] w-[30px] h-[26px] shrink-0">
                <path d="M9 5H6a3 3 0 0 0-3 3v9a3 3 0 0 0 3 3h6M21 21h3a3 3 0 0 0 3-3V9a3 3 0 0 0-3-3h-6" fill="none" stroke="#72ba78" strokeWidth="3.500" />
                <path d="M17 0l-7 5 7 5zM13 16l7 5-7 5z" fill="#72ba78" />
              </svg>
              <svg viewBox="0 0 30 30" className="ml-[24px] mt-[3px] w-[30px] h-[30px] shrink-0">
                <path d="M12 2C6 1 1 6 4 11c2 3 6 4 9 2" fill="none" stroke="#eee" strokeWidth="3.500" />
                <path d="M12 12l15 14" stroke="#e8cf72" strokeWidth="5.500" />
              </svg>
              <div className="ml-[17px]">
                <Dots />
              </div>
            </div>
            <div className="flex items-center mt-[12px] text-[#5c5c5c]">
              <Check kind="off" />
              <span className="ml-[9px]">Selected features only</span>
            </div>
            <div className="flex items-center mt-[15px]">
              <Check kind="idle" />
              <span className="ml-[9px]">Create centroid for each part</span>
              <svg viewBox="0 0 36 26" className="ml-auto mr-[1px] w-[36px] h-[26px]">
                <path d="M0 12l6-7v15z" fill="#777" />
                <rect x="6" y="2" width="20" height="22" fill="#bbb" />
                <path d="M10 8h12M10 17h12" stroke="#444" strokeWidth="2" />
                <path d="M27 18h8l-4 6z" fill="#bbb" />
              </svg>
            </div>
            <div className="pl-[4px] mt-[17px] leading-[22px]">Centroids</div>
            <div className="flex items-start mt-[9px]">
              <div className="w-[686px] h-[34px] bg-[#212121] border border-[#4a4a4a] flex items-center pl-[6px] text-[#5f5f5f]">
                [Create temporary layer]
              </div>
              <div className="ml-[10px]">
                <Dots />
              </div>
            </div>
            <div className="flex items-center mt-[10px]">
              <Check kind="on" />
              <span className="ml-[9px]">Open output file after running algorithm</span>
            </div>
          </div>
        </div>

        <div className="w-[24px] shrink-0 relative">
          <svg viewBox="0 0 5 10" className="absolute left-[7px] top-[5px] w-[5px] h-[10px]">
            <path d="M0 0l5 5-5 5z" fill="#777" />
          </svg>
          <div className="absolute left-[11px] top-[293px] h-[24px] w-[3px] border-l-[3px] border-dotted border-[#777]" />
        </div>

        <div className="w-[185px] h-[605px] shrink-0 bg-[#212121] pl-[10px] pt-[8px] text-[15.400px] leading-[21px] text-[#6a6a6a] whitespace-nowrap">
          <div className="text-[24px] leading-[34px] font-bold text-[#555]">Centroids</div>
          <p className="mt-[16px]">
            This algorithm creates
            <br />a new point layer,
            <br />with points
            <br />representing the
            <br />centroid of the
            <br />geometries in an input
            <br />layer.
          </p>
          <p className="mt-[18px]">
            The attributes
            <br />associated to each
            <br />point in the output
            <br />layer are the same
            <br />ones associated to the
            <br />original features.
          </p>
        </div>
      </div>

      <div className="flex items-start pl-[17px] mt-[43px]">
        <div className="w-[898px] h-[39px] border border-[#4a4a4a] border-b-2 flex items-center justify-center text-[15px] text-[#d8d8d8] pb-[1px]">
          0%
        </div>
        <div className="ml-[10px] mt-[2px] w-[62px] h-[34px] flex items-center justify-center border border-[#2a2a2a] border-b-2 text-[15.500px] text-[#565656]">
          Cancel
        </div>
      </div>
      <div className="flex items-start pl-[17px] pr-[18px] mt-[10px]">
        <Btn className="relative w-[103px] justify-start pl-[5px]">
          Advanced
          <svg viewBox="0 0 10 8" className="absolute right-[5px] bottom-[7px] w-[9px] h-[7px]">
            <path d="M0 0h10L5 8z" fill="#888" />
          </svg>
        </Btn>
        <Btn className="ml-[9px] w-[184px]">Run as Batch Process...</Btn>
        <Btn className="ml-auto w-[45px]">Run</Btn>
        <Btn className="ml-[9px] w-[54px]">Close</Btn>
        <Btn className="ml-[9px] w-[47px]">Help</Btn>
      </div>
    </div>
  );
}

const orange = "absolute left-[2px] right-[1px] top-0 bottom-[3px] border-2 border-t-0 border-[#b96e1f]";

export default function App() {
  return (
    <div className="relative w-[1821px] h-[924px] overflow-hidden bg-[#333] font-['Noto_Sans',sans-serif]">
      {/* toolbars */}
      <div className="h-[217px] flex flex-col -ml-[10.5px]">
        <div className="flex items-center h-9 shrink-0">
          <T><DocI /></T>
          <T><FolderI /></T>
          <T><SaveI /></T>
          <T className="ml-[3px]"><LayoutI /></T>
          <T className="-ml-[3px]"><WrenchDocI /></T>
          <T><StyleI /></T>
          <Sep className="w-[15px]" />
          <T><HandI /></T>
          <T><PanI /></T>
          <T><ZoomI kind="in" /></T>
          <T className="ml-[3px]"><ZoomI kind="out" /></T>
          <T className="-ml-[3px]"><ZoomI kind="full" /></T>
          <T><ZoomI kind="plain" /></T>
          <T><ZoomI kind="plain" /></T>
          <T><ZoomI kind="one" /></T>
          <T><ZoomI kind="last" /></T>
          <T><ZoomI kind="dim" /></T>
          <T><NewMapI /></T>
          <T className="ml-[3px]"><Map3dI /></T>
          <T className="ml-[3px]"><NewMapI blue /></T>
          <T className="-ml-[3px]"><BookmarkI /></T>
          <T><ClockI /></T>
          <T><RefreshI /></T>
          <Sep className="w-[16px]" />
          <T><SelectI /></T>
          <Drop />
          <T><OpenTableI /></T>
          <Drop className="mr-[8px]" />
          <T><DeselI /></T>
          <Drop />
          <T><SelPinI /></T>
          <Drop className="" />
          <Sep className="w-[9px] mr-[12px]" />
          <T><div className={orange} /><IdentI /></T>
          <T><StatsI /></T>
          <T><div className={orange} /><BigGearI /></T>
          <T><SigmaI /></T>
          <T><TableI /></T>
          <Drop />
          <T><RulerI /></T>
          <Drop />
          <T>
            <div className={orange} />
            <svg viewBox="0 0 14 24" className="absolute left-[11px] top-0 w-[14px] h-[24px]">
              <circle cx="10" cy="2" r="8" fill="#f3d13a" />
              <circle cx="11" cy="18" r="5" fill="#6fae78" />
            </svg>
          </T>
        </div>

        <div className="flex items-center h-9 mt-[14px] shrink-0">
          <T>
            <div className="absolute -left-[5px] right-[-4px] -top-[7px] -bottom-[7px] bg-[#474747] border-2 border-[#232323]" />
            <div className="relative"><AddLayersI /></div>
          </T>
          <T><GlobeBoxI /></T>
          <T><VStarI /></T>
          <T><FeatherI /></T>
          <T><ChipI /></T>
          <T><MeshI /></T>
          <T><VBoxI /></T>
          <Sep className="w-[13px]" />
          <T>
            <DimPencilsI />
            <div className="absolute right-[-4px] bottom-[3px]"><Drop className="" /></div>
          </T>
          <T className="-ml-[2px]"><PencilI /></T>
          <T className="ml-[2px]"><DimSaveI /></T>
          <T><DimLineI /></T>
          <Drop className="mr-[8px]" />
          <T><DimV><GearB x={21} y={18} fill="#4a4636" /></DimV></T>
          <T><HammerI /></T>
          <Drop className="mr-[8px]" />
          <T><DimTableI /></T>
          <T className="-ml-[3px]"><TrashI /></T>
          <T><ScissorsI /></T>
          <T className="ml-[3px]"><CopyI /></T>
          <T><PasteI /></T>
          <T><UndoI /></T>
          <T><UndoI flip /></T>
          <Sep className="w-[12px]" />
          <T><AbcYellow /></T>
          <T><PieBars /></T>
          <Sep className="w-[7px]" />
          <T><AbBlue /></T>
          <T><AbcRed /></T>
          <Sep className="w-[7px]" />
          <T><DimLabel t="ab"><ellipse cx="24" cy="27" rx="5" ry="7" fill="#777" /></DimLabel></T>
          <T className="ml-[2px]"><DimLabel><circle cx="22" cy="28" r="5" fill="none" stroke="#999" strokeWidth="3" /></DimLabel></T>
          <T><DimLabel><path d="M22 27h6v-4l7 7-7 6v-4h-6z" fill="#aaa" /></DimLabel></T>
          <T><DimLabel><Spiral /></DimLabel></T>
          <T><DimLabel><path d="M22 34l10-12 3 2-9 12z" fill="#bbb" /></DimLabel></T>
          <Sep className="w-[13px]" />
          <T><GlobeBinoI /></T>
          <Sep className="w-[13px]" />
          <T className="ml-[3px]"><PythonI /></T>
          <Sep className="w-[14px]" />
          <T><HelpI /></T>
          <Sep className="w-[10px]" />
        </div>

        <div className="flex items-center h-9 mt-[22px] shrink-0">
          <T>
            <Ic className="opacity-70">
              <path d="M-2 1l28 32H-2z" fill="#5e574b" stroke="#222" />
              <path d="M6 18l8 10H6z" fill="#333" />
            </Ic>
          </T>
          <T><DimV><path d="M22 25h6v-4l7 7-7 6v-4h-6z" fill="#aaa" /></DimV></T>
          <Drop />
          <T><Ic><Blob /><Spiral /></Ic></T>
          <T><Ic><Blob /><rect x="19" y="20" width="14" height="16" rx="3" fill="#3f3f3f" /><path d="M21 28h10M24 24l-4 4 4 4M28 24l4 4-4 4" stroke="#888" fill="none" /></Ic></T>
          <T>
            <Ic>
              <circle cx="12" cy="11" r="10" fill="#555" />
              <path d="M14 10l13 1 6 11-6 12H15l-5-12z" fill="#555" stroke="#333" />
              <path d="M12 11l11 13M23 17v7h-7" stroke="#222" fill="none" />
            </Ic>
          </T>
          <T><Ic><Ring /><GearB fill="#45412f" /></Ic></T>
          <T><Ic><Blob /><path d="M6 24l9 0-3 11-7-1z" fill="#555" /><GearB fill="#45412f" /></Ic></T>
          <T><Ic><Ring /><GearB fill="#45412f" /></Ic></T>
          <T><Ic><Ring /><XB /></Ic></T>
          <T><Ic><Blob /><path d="M6 24l9 0-3 11-7-1z" fill="#555" /><XB /></Ic></T>
          <T><Ic><Blob /><path d="M14 22v12h3l2-12z" fill="#555" /></Ic></T>
          <T>
            <Ic>
              <path d="M10 30c-8-4-2-14 2-20 4-7 12-9 16-5 4 5-1 11-4 15-4 6-7 12-14 10z" fill="#45453a" stroke="#555" strokeWidth="2" />
            </Ic>
          </T>
          <T><DimV><circle cx="25" cy="28" r="6" fill="none" stroke="#aaa" strokeWidth="2" /></DimV></T>
          <T>
            <Ic className="opacity-60">
              <path d="M2 18h32M18 1v34M12 12v20M24 12v20" stroke="#666" strokeWidth="1.500" />
              <GearB x={24} y={3} fill="#45412f" />
              <XB x={2} y={22} />
            </Ic>
          </T>
        </div>

        <div className="flex items-center h-9 mt-[22px] shrink-0">
          <T><SearchGreen /></T>
          <T className="-ml-[3px]"><MapPenI /></T>
        </div>
      </div>

      {/* main area */}
      <div className="flex h-[707px]">
        <div className="w-[403px] shrink-0 flex flex-col">
          <div className="relative h-[22px] flex items-center justify-center w-[334px] text-[16px] text-[#9a9a9a]">
            Layers
            <svg viewBox="0 0 16 16" className="absolute left-[372px] top-[2px] w-[17px] h-[17px]">
              <rect x=".5" y=".5" width="15" height="15" fill="none" stroke="#555" strokeDasharray="3 2" />
              <path d="M5 5h7v7H5M12 5L6 11" fill="none" stroke="#666" />
            </svg>
          </div>

          <div className="flex items-center h-[24px] mt-[12px] -ml-[16px]">
            <div className="w-[38px] flex justify-center">
              <svg viewBox="0 0 24 24" className="w-6 h-6">
                <path d="M22 2L12 12" stroke="#c8973c" strokeWidth="2" />
                <path d="M4 10l8-2 5 6-5 8-9-5z" fill="#d8a860" />
              </svg>
            </div>
            <div className="w-[40px] flex justify-center">
              <svg viewBox="0 0 24 24" className="w-6 h-6">
                <rect x="2" y="7" width="14" height="14" fill="none" stroke="#aaa" strokeWidth="1.500" />
                <rect x="8" y="3" width="10" height="16" fill="#ddd" stroke="#555" />
                <path d="M11 1v15" stroke="#3f72a8" strokeWidth="2" />
                <rect x="14" y="15" width="10" height="9" rx="1.500" fill="#4f8f55" />
                <path d="M19 16.500v6M16 19.500h6" stroke="#fff" strokeWidth="1.500" />
              </svg>
            </div>
            <div className="w-[40px] flex justify-center">
              <svg viewBox="0 0 26 20" className="w-[26px] h-[20px]">
                <path d="M1 9c6-8 17-8 23 0-6 8-17 8-23 0z" fill="#ddd" />
                <circle cx="12" cy="9" r="5" fill="#6b95c6" />
                <circle cx="12" cy="9" r="2" fill="#1c2b3c" />
                <path d="M18 11h8l-4 6z" fill="#999" />
              </svg>
            </div>
            <div className="w-[40px] flex justify-center">
              <svg viewBox="0 0 24 24" className="w-6 h-6">
                <path d="M1 1h17v3H1z" fill="#f2dc3c" />
                <path d="M1 5h17l-6 7v10l-5-3v-7z" fill="#6b95c6" />
                <path d="M16 16h8l-4 6z" fill="#999" />
              </svg>
            </div>
            <div className="w-[40px] flex justify-center opacity-50">
              <svg viewBox="0 0 24 24" className="w-6 h-6">
                <path d="M13 1H5l3 6-3 3h8" fill="none" stroke="#555" strokeWidth="2" />
                <path d="M11 14h10l-2 3v6h-6v-6z" fill="#666" />
              </svg>
            </div>
            <Drop className="mr-[4px]" />
            <div className="w-[40px] flex justify-center">
              <svg viewBox="0 0 24 24" className="w-6 h-6">
                <path d="M1 2v20M1 4h9M1 20h9" stroke="#aaa" />
                <rect x="4" y="6" width="5" height="5" fill="#e89020" />
                <rect x="4" y="14" width="5" height="5" fill="#e89020" />
                <path d="M13 1h6v13h4l-7 8-7-8h4z" fill="#5a8ec9" />
              </svg>
            </div>
            <div className="w-[40px] flex justify-center">
              <svg viewBox="0 0 24 24" className="w-6 h-6">
                <path d="M1 2v20M1 4h9M1 20h9" stroke="#aaa" />
                <rect x="4" y="8" width="5" height="5" fill="#e89020" />
                <rect x="4" y="16" width="5" height="5" fill="#e89020" />
                <path d="M13 22h6V9h4l-7-8-7 8h4z" fill="#5a8ec9" />
              </svg>
            </div>
            <div className="w-[40px] flex justify-center">
              <svg viewBox="0 0 24 24" className="w-6 h-6">
                <rect x="2" y="1" width="18" height="18" fill="#eee" stroke="#888" />
                <rect x="13" y="15" width="10" height="8" rx="1.500" fill="#e23c3c" />
                <path d="M15 19h6" stroke="#fff" strokeWidth="1.500" />
              </svg>
            </div>
          </div>

          <div className="w-[390px] h-[624px] mt-[12px] bg-[#212121] border border-l-0 border-[#4a4a4a] pl-[13px] pr-[1px] pt-[1px]">
            <div className="border-t-2 border-[#333]">
              <Layer name="Exploded" on bold chip sym={<Line c="bg-[#a33a63]" />} />
              <Layer name="Lines" chip sym={<Line c="bg-[#8a2626]" />} />
              <Layer name="data — roads" sym={<Line c="bg-[#3c77b8]" />} />
              <Layer name="data — buildings" sym={<div className="w-[24px] h-[24px] bg-[#969696] border border-[#666]" />} />
            </div>
          </div>
          <div className="flex h-[13px] text-[15px] text-[#c8c8c8] overflow-hidden">
            <div className="w-[90px] pl-[6px] leading-[28px] border-r-2 border-[#4a4a4a]">Browser</div>
            <div className="w-[98px] border-r-2 border-[#4a4a4a]" />
          </div>
        </div>

        <div className="w-[855px] shrink-0 bg-white">
          <BuildingMap />
        </div>

        <div className="w-[13px] shrink-0 bg-[#2b2b2b] border-r border-[#3d3d3d]" />

        <div className="flex-1 flex flex-col pt-[70px]">
          <div className="h-[34px] shrink-0 bg-[#222] border-y border-[#555]" />
          <div className="flex-1 bg-[#1f1f1f] pt-[164px]">
            <div className="h-[27px] bg-[#0f6800]" />
          </div>
        </div>
      </div>

      <Centroids />
    </div>
  );
}
